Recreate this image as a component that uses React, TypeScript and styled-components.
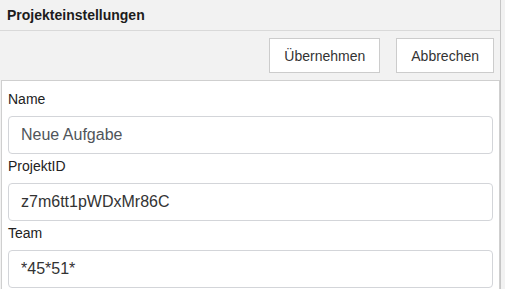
import { FC } from 'react';
import styled, { createGlobalStyle } from 'styled-components';

const GlobalStyle = createGlobalStyle`
  html, body {
    margin: 0;
    padding: 0;
    background: #f2f2f2;
    font-family: "Liberation Sans", Arial, sans-serif;
    overflow: hidden;
  }
`;

interface Field {
  label: string;
  value: string;
  isPlaceholder?: boolean;
}

const fields: Field[] = [
  { label: 'Name', value: 'Neue Aufgabe', isPlaceholder: true },
  { label: 'ProjektID', value: 'z7m6tt1pWDxMr86C' },
  { label: 'Team', value: '*45*51*' },
];

const App: FC = () => {
  return (
    <>
      <GlobalStyle />
      <StyledWindow>
        {/* 1. title bar */}
        <StyledHeader>Projekteinstellungen</StyledHeader>

        {/* 2. toolbar with actions */}
        <StyledToolbar>
          <StyledButton type="button">Übernehmen</StyledButton>
          <StyledButton type="button">Abbrechen</StyledButton>
        </StyledToolbar>

        {/* 3. form */}
        <StyledContent>
          {fields.map((field) => (
            <StyledFieldGroup key={field.label}>
              <StyledLabel>{field.label}</StyledLabel>
              <StyledInput
                readOnly
                value={field.isPlaceholder ? '' : field.value}
                placeholder={field.isPlaceholder ? field.value : undefined}
              />
            </StyledFieldGroup>
          ))}
        </StyledContent>
      </StyledWindow>
    </>
  );
};

export default App;

const StyledWindow = styled.div`
  display: flex;
  flex-direction: column;
  width: 500px;
  height: 289px;
  border-right: 1px solid #c6c6c6;
  background: #f2f2f2;
`;

const StyledHeader = styled.div`
  height: 31px;
  box-sizing: border-box;
  padding: 7px 0 0 7px;
  border-bottom: 1px solid #d9d9d9;
  font-size: 14px;
  line-height: 16px;
  font-weight: 700;
  color: #1c1c1c;
`;

const StyledToolbar = styled.div`
  display: flex;
  justify-content: flex-end;
  gap: 16px;
  padding: 7px 6px 7px 0;
`;

const StyledButton = styled.button`
  height: 35px;
  padding: 0 14px;
  border: 1px solid #cccccc;
  border-radius: 0;
  background: #ffffff;
  font-family: "Liberation Sans", Arial, sans-serif;
  font-size: 14px;
  color: #333333;
  cursor: pointer;
`;

const StyledContent = styled.div`
  flex: 1;
  display: flex;
  flex-direction: column;
  margin-left: 1px;
  padding: 6px 6px 0 6px;
  border: 1px solid #cfcfcf;
  border-bottom: none;
  background: #ffffff;
`;

const StyledFieldGroup = styled.div`
  display: flex;
  flex-direction: column;
`;

const StyledLabel = styled.label`
  padding-top: 2px;
  margin-bottom: 7px;
  font-size: 14px;
  line-height: 20px;
  color: #222222;
`;

const StyledInput = styled.input`
  box-sizing: border-box;
  width: 100%;
  height: 38px;
  padding: 0 12px;
  border: 1px solid #d3d5d9;
  border-radius: 4px;
  background: #ffffff;
  font-family: "Liberation Sans", Arial, sans-serif;
  font-size: 16px;
  color: #333333;
  outline: none;

  &::placeholder {
    color: #50555a;
    opacity: 1;
  }
`;
